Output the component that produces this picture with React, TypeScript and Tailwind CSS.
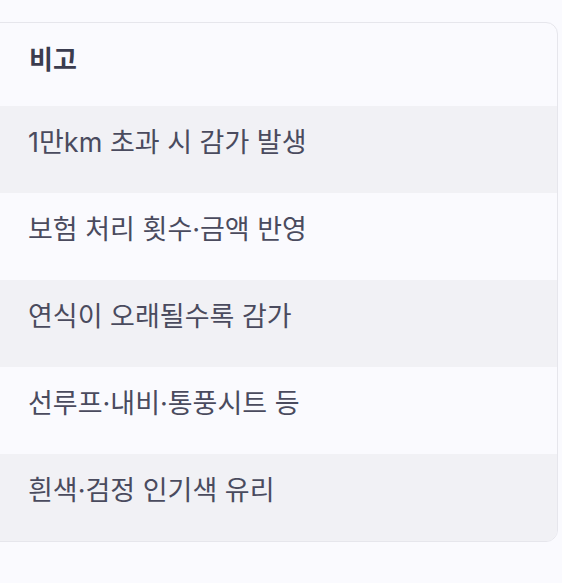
import React from "react";

const rows = [
  "1만km 초과 시 감가 발생",
  "보험 처리 횟수·금액 반영",
  "연식이 오래될수록 감가",
  "선루프·내비·통풍시트 등",
  "흰색·검정 인기색 유리",
];

export default function App() {
  return (
    <div
      className="min-h-[583px] w-[562px] overflow-hidden bg-[#fafafe] pt-[22px]"
      style={{ fontFamily: 'Inter, "Noto Sans CJK KR", sans-serif' }}
    >
      <div className="ml-[-12px] w-[570px] overflow-hidden rounded-xl border border-[#e6e6ec]">
        <div className="flex h-[83px] items-center px-10 pb-[11px] text-[26px] font-bold text-[#3b3c4f]">
          비고
        </div>
        {rows.map((text, i) => (
          <div
            key={i}
            className={`flex h-[87px] items-center pl-[39px] pr-10 pb-[13px] text-[27px] text-[#4a4b5e] ${
              i % 2 === 0 ? "bg-[#f1f1f5]" : "bg-[#fafafe]"
            }`}
          >
            {text}
          </div>
        ))}
      </div>
    </div>
  );
}
